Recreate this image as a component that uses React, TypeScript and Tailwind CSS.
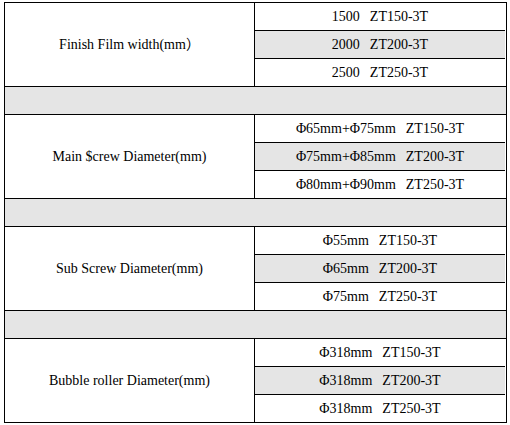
import React from 'react';

type Section = {
  label: string;
  values: [string, string][];
};

const sections: Section[] = [
  {
    label: 'Finish Film width(mm）',
    values: [
      ['1500', 'ZT150-3T'],
      ['2000', 'ZT200-3T'],
      ['2500', 'ZT250-3T'],
    ],
  },
  {
    label: 'Main $crew Diameter(mm)',
    values: [
      ['Φ65mm+Φ75mm', 'ZT150-3T'],
      ['Φ75mm+Φ85mm', 'ZT200-3T'],
      ['Φ80mm+Φ90mm', 'ZT250-3T'],
    ],
  },
  {
    label: 'Sub Screw Diameter(mm)',
    values: [
      ['Φ55mm', 'ZT150-3T'],
      ['Φ65mm', 'ZT200-3T'],
      ['Φ75mm', 'ZT250-3T'],
    ],
  },
  {
    label: 'Bubble roller Diameter(mm)',
    values: [
      ['Φ318mm', 'ZT150-3T'],
      ['Φ318mm', 'ZT200-3T'],
      ['Φ318mm', 'ZT250-3T'],
    ],
  },
];

const App: React.FC = () => {
  return (
    <div className="min-h-[425px] w-[510px] bg-white pt-[2px] pl-[4px] font-['Liberation_Serif','Times_New_Roman','Noto_Sans_CJK_SC',serif] text-[14px] text-black">
      <div className="w-[503px] border border-black">
        {sections.map((section, i) => (
          <React.Fragment key={section.label}>
            {/* gray spacer row between sections */}
            {i > 0 && <div className="h-[28px] border-t border-black bg-[#e5e5e5]" />}
            <div className={i > 0 ? 'flex border-t border-black' : 'flex'}>
              <div className="flex w-[250px] items-center justify-center border-r border-black">
                {section.label}
              </div>
              <div className="flex w-[250px] flex-col">
                {section.values.map(([size, model], j) => (
                  <div
                    key={model}
                    className={
                      'flex items-center justify-center gap-[10px] ' +
                      (j === 0 ? 'h-[27px]' : 'h-[28px] border-t border-black') +
                      (j === 1 ? ' bg-[#e5e5e5]' : '')
                    }
                  >
                    <span>{size}</span>
                    <span>{model}</span>
                  </div>
                ))}
              </div>
            </div>
          </React.Fragment>
        ))}
      </div>
    </div>
  );
};

export default App;
